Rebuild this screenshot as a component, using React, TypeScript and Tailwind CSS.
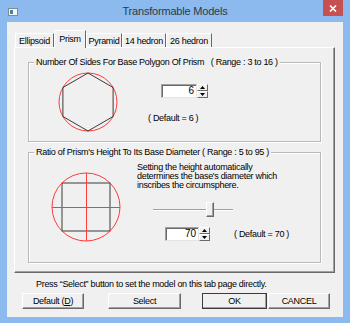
import React from "react";

const UI = { fontFamily: "'Liberation Sans', Arial, sans-serif" };
const T = "text-[9px] tracking-[-0.3px]";

function Edit({ value, w }: { value: string; w: string }) {
  return (
    <div className={`${w} h-[14px] bg-white border border-t-[#a0a0a0] border-l-[#a0a0a0] border-r-[#e3e3e3] border-b-[#e3e3e3] shadow-[inset_1px_1px_0_#696969] flex items-center justify-end pr-[2px] text-[10px] leading-[12px]`}>
      {value}
    </div>
  );
}

function SpinBtn({ up }: { up: boolean }) {
  return (
    <div className="w-[11px] h-[7px] bg-[#f0f0f0] border border-t-white border-l-white border-r-[#696969] border-b-[#696969] flex items-center justify-center">
      <svg width="5" height="3" viewBox="0 0 5 3">
        {up ? <polygon points="2.5,0 5,3 0,3" fill="#000" /> : <polygon points="0,0 5,0 2.5,3" fill="#000" />}
      </svg>
    </div>
  );
}

function Spin({ value, w }: { value: string; w: string }) {
  return (
    <div className="flex">
      <Edit value={value} w={w} />
      <div className="flex flex-col">
        <SpinBtn up />
        <SpinBtn up={false} />
      </div>
    </div>
  );
}

function Btn({ children, w, def }: { children: React.ReactNode; w: string; def?: boolean }) {
  return (
    <div className={`${w} h-[16px] ${def ? "outline outline-1 outline-[#3c3c3c] -outline-offset-1" : ""} bg-[#f0f0f0] border border-t-white border-l-white border-r-[#696969] border-b-[#696969] shadow-[inset_-1px_-1px_0_#a0a0a0] flex items-center justify-center text-[9px] tracking-[-0.3px] leading-[12px] whitespace-pre`}>
      {children}
    </div>
  );
}

function Group({ label, h, children, mt }: { label: string; h: string; children: React.ReactNode; mt: string }) {
  return (
    <div className={`${mt} ml-[13px] w-[293px] ${h} border border-[#b9b9b9] shadow-[1px_1px_0_#fff,inset_1px_1px_0_#fff] flex flex-col`}>
      <div className="-mt-[7px] ml-[5px] px-[2px] w-fit h-[12px] leading-[12px] bg-[#f0f0f0] text-[9px] tracking-[-0.3px] whitespace-pre">{label}</div>
      {children}
    </div>
  );
}

export default function App() {
  const tabs = [
    { t: "Ellipsoid", w: "w-[39px]" },
    { t: "Prism", w: "w-[32px]", sel: true },
    { t: "Pyramid", w: "w-[36px]" },
    { t: "14 hedron", w: "w-[44px]" },
    { t: "26 hedron", w: "w-[46px]" },
  ];
  return (
    <div className="w-[350px] h-[323px] bg-[#8dbaee] flex flex-col overflow-hidden text-black" style={UI}>
      <div className="h-[22px] grid grid-cols-[1fr_auto_1fr]">
        <div className="pl-[8px] pt-[8px]">
          <svg width="10" height="8" viewBox="0 0 10 8">
            <rect x="0.5" y="0.5" width="9" height="7" fill="#f4f4f4" stroke="#7f8a96" />
            <rect x="2" y="2" width="2" height="4" fill="#2e9a6a" />
            <rect x="4" y="2" width="1" height="4" fill="#4a7fd0" />
          </svg>
        </div>
        <div className="pt-[4px] text-[11px] tracking-[-0.2px] leading-[14px] text-[#2b3a4a]">
          Transformable Models
        </div>
        <div className="flex justify-end pr-[7px]">
          <div className="w-[20px] h-[16px] bg-[#c75050] flex items-center justify-center">
            <svg width="8" height="7" viewBox="0 0 8 7">
              <path d="M1 0.5 L7 6.5 M7 0.5 L1 6.5" stroke="#fff" strokeWidth="1.6" />
            </svg>
          </div>
        </div>
      </div>

      <div className="mx-[7px] h-[295px] bg-[#f0f0f0] flex flex-col">
        <div className="ml-[8px] mt-[8px] h-[17px] flex items-end relative z-10">
          {tabs.map((tb) =>
            tb.sel ? (
              <div key={tb.t} className={`${tb.w} h-[18px] -mb-[1px] bg-[#f0f0f0] border-l border-t border-r border-l-white border-t-white border-r-[#696969] flex justify-center pt-[2px] ${T} leading-[12px] whitespace-pre`}>
                {tb.t}
              </div>
            ) : (
              <div key={tb.t} className={`${tb.w} h-[14px] bg-[#f0f0f0] border-l border-t border-r border-l-white border-t-white border-r-[#696969] flex justify-center pt-[1px] ${T} leading-[12px] whitespace-pre`}>
                {tb.t}
              </div>
            )
          )}
        </div>

        <div className="ml-[7px] w-[321px] h-[226px] border border-t-white border-l-white border-r-[#696969] border-b-[#696969] shadow-[inset_-1px_-1px_0_#a0a0a0] flex flex-col">
          <Group label={"Number Of Sides For Base Polygon Of Prism   ( Range : 3 to 16 )"} h="h-[80px]" mt="mt-[14px]">
            <div className="flex">
              <svg className="ml-[27px] mt-[2px]" width="64" height="64" viewBox="0 0 64 64">
                <circle cx="32" cy="32" r="29" fill="none" stroke="#ff3b3b" strokeWidth="1" />
                <polygon
                  points="32,3 57.1,17.5 57.1,46.5 32,61 6.9,46.5 6.9,17.5"
                  fill="none"
                  stroke="#3a3a3a"
                  strokeWidth="1"
                />
              </svg>
              <div className="ml-[28px] flex flex-col">
                <div className="mt-[16px] ml-[13px]">
                  <Spin value="6" w="w-[36px]" />
                </div>
                <div className={`mt-[14px] ${T} leading-[12px] whitespace-pre`}>( Default = 6 )</div>
              </div>
            </div>
          </Group>

          <Group label={"Ratio of Prism's Height To Its Base Diameter ( Range : 5 to 95 )"} h="h-[111px]" mt="mt-[10px]">
            <div className="flex">
              <svg className="ml-[21px] mt-[13px]" width="72" height="72" viewBox="0 0 72 72">
                <rect x="12" y="12" width="48" height="48" fill="none" stroke="#3a3a3a" strokeWidth="1" />
                <circle cx="36" cy="36" r="34" fill="none" stroke="#ff3b3b" strokeWidth="1" />
                <path d="M2 36.5 H70 M36.5 2 V70" stroke="#ff3b3b" strokeWidth="1" />
              </svg>
              <div className="flex flex-col">
                <div className={`ml-[15px] mt-[5px] ${T} leading-[9px] whitespace-pre`}>
                  <div>Setting the height automatically</div>
                  <div>determines the base's diameter which</div>
                  <div>inscribes the circumsphere.</div>
                </div>
                <div className="ml-[31px] mt-[12px] w-[80px] h-[15px] relative flex items-center">
                  <div className="w-full h-[2px] border-t border-t-[#a0a0a0] border-b border-b-white" />
                  <div className="absolute left-[53px] top-0 w-[8px] h-[15px] bg-[#f0f0f0] border border-t-white border-l-white border-r-[#696969] border-b-[#696969] shadow-[inset_-1px_-1px_0_#a0a0a0]" />
                </div>
                <div className="ml-[43px] mt-[10px] flex items-center">
                  <Spin value="70" w="w-[34px]" />
                  <div className={`ml-[24px] ${T} leading-[12px] whitespace-pre`}>( Default = 70 )</div>
                </div>
              </div>
            </div>
          </Group>
        </div>

        <div className={`ml-[29px] mt-[5px] ${T} leading-[12px] whitespace-pre`}>
          Press “Select” button to set the model on this tab page directly.
        </div>
        <div className="mt-[3px] ml-[15px] flex">
          <Btn w="w-[62px]">
            Default (<span className="underline">D</span>)
          </Btn>
          <div className="ml-[24px]">
            <Btn w="w-[73px]">Select</Btn>
          </div>
          <div className="ml-[21px]">
            <Btn w="w-[65px]" def>OK</Btn>
          </div>
          <div className="ml-[1px]">
            <Btn w="w-[62px]">CANCEL</Btn>
          </div>
        </div>
      </div>
    </div>
  );
}
